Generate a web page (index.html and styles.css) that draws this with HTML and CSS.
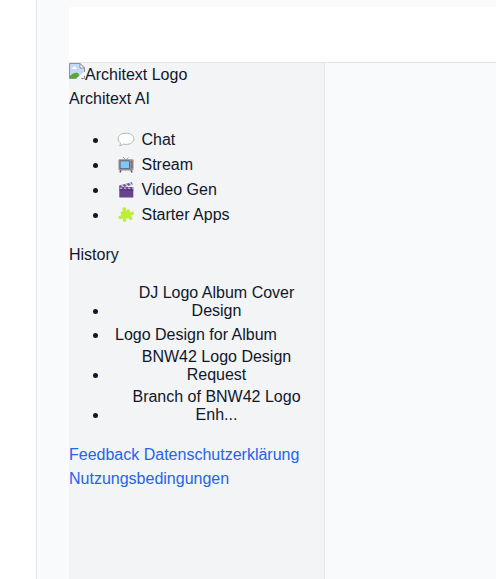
FILE: index.html
```html
<!DOCTYPE html>
<html lang="de">
<head>
<meta charset="utf-8">
<title>Architext AI</title>
<link rel="stylesheet" href="styles.css">
</head>
<body>
<div class="rail"></div>
<div class="app">
  <header class="topbar"></header>
  <div class="body">
    <aside class="sidebar">
      <div class="logo"><svg class="broken" width="16" height="16" viewBox="0 0 16 16" aria-hidden="true">
        <path d="M.5.5H11L15.500 5v10.500H.5z" fill="#c6d8f8"/>
        <path d="M2.500 6c0-1 .8-1.500 1.500-1.200C4.500 3 7 3.200 7 5c1 0 1 1 .5 1z" fill="#fff"/>
        <path d="M1 15v-2c2-2.500 5-4 8-3l3 5z" fill="#53a93a"/>
        <path d="M9 16l7-6v6z" fill="#f3f4f6"/>
        <path d="M8 15.500H.5V.5H11L15.500 5v4" fill="none" stroke="#929292"/>
        <path d="M11 .5V5h4.500z" fill="#fff" stroke="#929292"/>
        <path d="M8 16L16 9.500" stroke="#fff" stroke-width="2"/>
        <path d="M12 15.500h3.500V13" fill="none" stroke="#929292"/>
      </svg>Architext Logo</div>
      <div>Architext AI</div>
      <ul class="nav">
        <li><a><svg class="icon" viewBox="0 0 18 18"><path d="M9 2.200c4.600 0 7.900 2.400 7.900 5.600s-3.300 5.600-7.900 5.600c-1 0-1.900-.1-2.700-.3-1 1-2.300 1.500-3.800 1.600.9-.8 1.200-1.700 1.100-2.700C2 11 1.100 9.500 1.100 7.800c0-3.200 3.300-5.600 7.900-5.600z" fill="#fff" stroke="#b4b4b4"/></svg>Chat</a></li>
        <li><a><svg class="icon" viewBox="0 0 18 18"><path d="M6 1l3 3 2.500-2.500" fill="none" stroke="#a0a0a0"/><path d="M4 14l-1 2.500M14 14l1 2.500" stroke="#555" stroke-width="1.500"/><rect x="1.500" y="3.300" width="15" height="11.200" rx="1" fill="#998e91"/><rect x="2.700" y="4.500" width="10.300" height="8.500" rx="1" fill="#5b5660"/><rect x="3.500" y="5.200" width="8.700" height="7" rx=".5" fill="#7cc8fb"/><circle cx="14.800" cy="6.300" r=".9" fill="#d13438"/><path d="M14 9h1.700M14 11h1.700" stroke="#5f5960"/></svg>Stream</a></li>
        <li><a><svg class="icon" viewBox="0 0 18 18"><path d="M2 4.500L15 1.200l.7 2.500L2.600 7z" fill="#6b5599"/><path d="M4.500 4l2.200 2M8.500 3l2.200 2M12.500 2l2.200 2" stroke="#dcd7e8" stroke-width="1.200"/><rect x="2.300" y="6" width="14" height="10.500" rx=".5" fill="#68418f"/><path d="M3 7.300h13" stroke="#b5a9cf" stroke-width="1.600" stroke-dasharray="2.300 1.700"/><path d="M2.300 9h14" stroke="#523678"/></svg>Video Gen</a></li>
        <li><a><svg class="icon" viewBox="0 0 18 18"><path transform="rotate(-18 9 9)" fill="#c0ed3b" d="M4.500 4.500h3.300C6.500 2.800 7.400 1 9.200 1s2.700 1.800 1.400 3.500H14v3.600c1.700-1.200 3.300-.4 3.300 1.300s-1.600 2.500-3.300 1.300V15h-3.400c.8-1.600 0-2.500-1.400-2.500S7 13.400 7.800 15H4.500v-4.300c-1.700 1.200-3.500.4-3.500-1.300s1.800-2.500 3.500-1.300z"/></svg>Starter Apps</a></li>
      </ul>
      <div>History</div>
      <ul class="history">
        <li><button>DJ Logo Album Cover Design</button></li>
        <li><button>Logo Design for Album</button></li>
        <li><button>BNW42 Logo Design Request</button></li>
        <li><button>Branch of BNW42 Logo Enh...</button></li>
      </ul>
      <div class="links"><a>Feedback</a> <a>Datenschutzerklärung</a> <a>Nutzungsbedingungen</a></div>
    </aside>
    <main></main>
  </div>
</div>
</body>
</html>
```
FILE: styles.css
```css
* { box-sizing: border-box; }
body {
  margin: 0;
  height: 579px;
  display: flex;
  overflow: hidden;
  background: #f9fafc;
  color: #0f172a;
  font: 16px/24px "Liberation Sans", Arial, sans-serif;
}
.rail {
  flex: 0 0 37px;
  background: #fff;
  border-right: 1px solid #e2e5e9;
}
.app {
  flex: 1;
  padding: 7px 0 0 32px;
  display: flex;
  flex-direction: column;
}
.topbar {
  flex: 0 0 56px;
  background: #fff;
  border-bottom: 1px solid #e2e4e9;
  border-top-left-radius: 2px;
}
.body { flex: 1; display: flex; }
.sidebar {
  flex: 0 0 256px;
  background: #f3f4f6;
  border-right: 1px solid #e2e4e8;
}
.logo { height: 24px; }
.broken { vertical-align: 1px; }
ul { margin: 16px 0; padding: 0 0 0 40px; }
.nav li { height: 25px; line-height: 25px; }
.nav a { padding-left: 8px; }
.icon { width: 18px; height: 18px; margin-right: 6.5px; vertical-align: -4px; }
.history li { line-height: 24px; }
button {
  max-width: 215px;
  margin: 0;
  padding: 1px 6px;
  border: 0;
  background: none;
  color: inherit;
  font: inherit;
  line-height: 18px;
  text-align: center;
}
.links { color: #2563eb; }
main { flex: 1; }
```
